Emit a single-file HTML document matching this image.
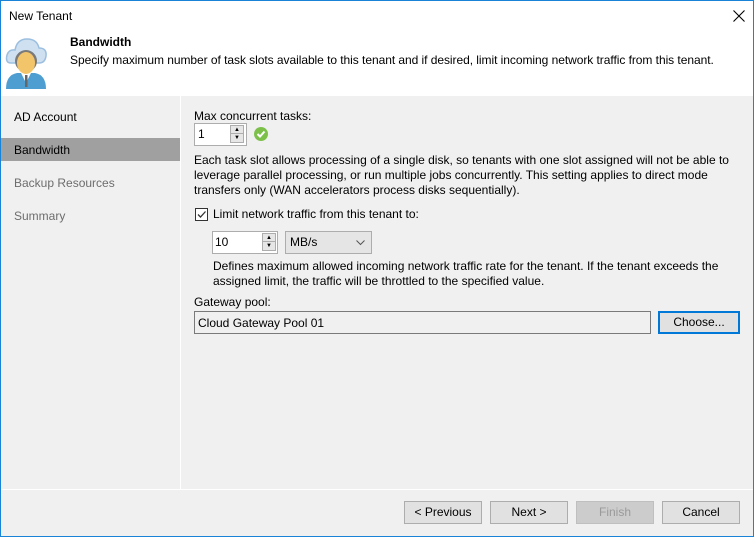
<!DOCTYPE html>
<html><head><style>
*{margin:0;padding:0;box-sizing:border-box}
body{width:754px;height:537px;overflow:hidden;font-family:"Liberation Sans",sans-serif;font-size:12px;color:#000;background:#f0f0f0;position:relative}
.a{position:absolute;white-space:nowrap}
.frame{position:absolute;left:0;top:0;width:754px;height:537px;border:1px solid #1883d7;pointer-events:none}
.btn{position:absolute;top:501px;width:78px;height:23px;background:#e1e1e1;border:1px solid #adadad;text-align:center;line-height:21px}
.sp{position:absolute;width:14px;height:18px;border:1px solid #adadad;background:#e6e6e6}
.sp div{height:8px;border-bottom:1px solid #adadad;font-size:6px;line-height:8px;text-align:center}
</style></head><body>
<div class="a" style="left:0;top:0;width:754px;height:96px;background:#fff"></div>
<div class="a" style="left:9px;top:9px">New Tenant</div>
<svg class="a" style="left:733px;top:10px" width="12" height="12"><path d="M0.5 0.5 L11.5 11.5 M11.5 0.5 L0.5 11.5" stroke="#000" stroke-width="1.1"/></svg>
<svg class="a" style="left:5px;top:33px" width="42" height="56" viewBox="0 0 42 56">
<path d="M6 30 Q0 30 2 22 Q4 16 10 17 Q12 6 22 6 Q32 6 34 15 Q42 15 41 23 Q40 30 34 30Z" fill="#cfe0f0" stroke="#9cbfe0" stroke-width="1.5"/>
<path d="M1 56 Q1 42 12 40 L30 40 Q41 42 41 56Z" fill="#4f9ed1"/>
<path d="M16 40 L21 50 L26 40Z" fill="#fff"/>
<rect x="20" y="42" width="2.5" height="12" fill="#666"/>
<circle cx="21" cy="28" r="11" fill="#7a7a7a"/>
<ellipse cx="21" cy="30" rx="9" ry="11" fill="#f3c56b"/>
</svg>
<div class="a" style="left:70px;top:35px;font-weight:bold">Bandwidth</div>
<div class="a" style="left:70px;top:53px;font-size:12px;letter-spacing:-0.05px">Specify maximum number of task slots available to this tenant and if desired, limit incoming network traffic from this tenant.</div>
<div class="a" style="left:180px;top:96px;width:1px;height:393px;background:#fff"></div>
<div class="a" style="left:0;top:489px;width:754px;height:1px;background:#fff"></div>
<div class="a" style="left:14px;top:110px">AD Account</div>
<div class="a" style="left:1px;top:138px;width:179px;height:23px;background:#a0a0a0"></div>
<div class="a" style="left:14px;top:143px">Bandwidth</div>
<div class="a" style="left:14px;top:176px;color:#6d6d6d">Backup Resources</div>
<div class="a" style="left:14px;top:209px;color:#6d6d6d">Summary</div>
<div class="a" style="left:194px;top:109px">Max concurrent tasks:</div>
<div class="a" style="left:194px;top:123px;width:53px;height:23px;background:#fff;border:1px solid #adadad"></div>
<div class="a" style="left:198px;top:127px">1</div>
<div class="sp" style="left:230px;top:125px"><div>▲</div><div style="border:0">▼</div></div>
<svg class="a" style="left:254px;top:127px" width="14" height="14"><circle cx="7" cy="7" r="7" fill="#7cc04a"/><path d="M3.5 7 L6 9.5 L10.5 4.5" stroke="#fff" stroke-width="2" fill="none"/></svg>
<div class="a" style="left:194px;top:153px;line-height:15px">Each task slot allows processing of a single disk, so tenants with one slot assigned will not be able to<br>leverage parallel processing, or run multiple jobs concurrently. This setting applies to direct mode<br>transfers only (WAN accelerators process disks sequentially).</div>
<div class="a" style="left:195px;top:208px;width:13px;height:13px;border:1px solid #333;background:#fff"></div>
<svg class="a" style="left:196px;top:209px" width="11" height="11"><path d="M2 5.5 L4.5 8 L9.5 2.5" stroke="#333" stroke-width="1.3" fill="none"/></svg>
<div class="a" style="left:213px;top:207px">Limit network traffic from this tenant to:</div>
<div class="a" style="left:212px;top:231px;width:66px;height:23px;background:#fff;border:1px solid #adadad"></div>
<div class="a" style="left:215px;top:235px">10</div>
<div class="sp" style="left:262px;top:233px"><div>▲</div><div style="border:0">▼</div></div>
<div class="a" style="left:285px;top:231px;width:87px;height:23px;background:#e5e5e5;border:1px solid #adadad"></div>
<div class="a" style="left:290px;top:235px">MB/s</div>
<svg class="a" style="left:356px;top:240px" width="9" height="6"><path d="M0.5 0.5 L4.5 4.5 L8.5 0.5" stroke="#555" fill="none"/></svg>
<div class="a" style="left:213px;top:259px;line-height:15px">Defines maximum allowed incoming network traffic rate for the tenant.  If the tenant exceeds the<br>assigned limit, the traffic will be throttled to the specified value.</div>
<div class="a" style="left:194px;top:295px">Gateway pool:</div>
<div class="a" style="left:194px;top:311px;width:457px;height:23px;background:#f0f0f0;border:1px solid #7a7a7a"></div>
<div class="a" style="left:198px;top:316px">Cloud Gateway Pool 01</div>
<div class="a" style="left:658px;top:311px;width:82px;height:23px;background:#e1e1e1;border:2px solid #0078d7;text-align:center;line-height:19px">Choose...</div>
<div class="btn" style="left:404px">&lt; Previous</div>
<div class="btn" style="left:490px">Next &gt;</div>
<div class="btn" style="left:576px;background:#cccccc;border-color:#bfbfbf;color:#9a9a9a">Finish</div>
<div class="btn" style="left:662px">Cancel</div>
<div class="frame"></div>
</body></html>
